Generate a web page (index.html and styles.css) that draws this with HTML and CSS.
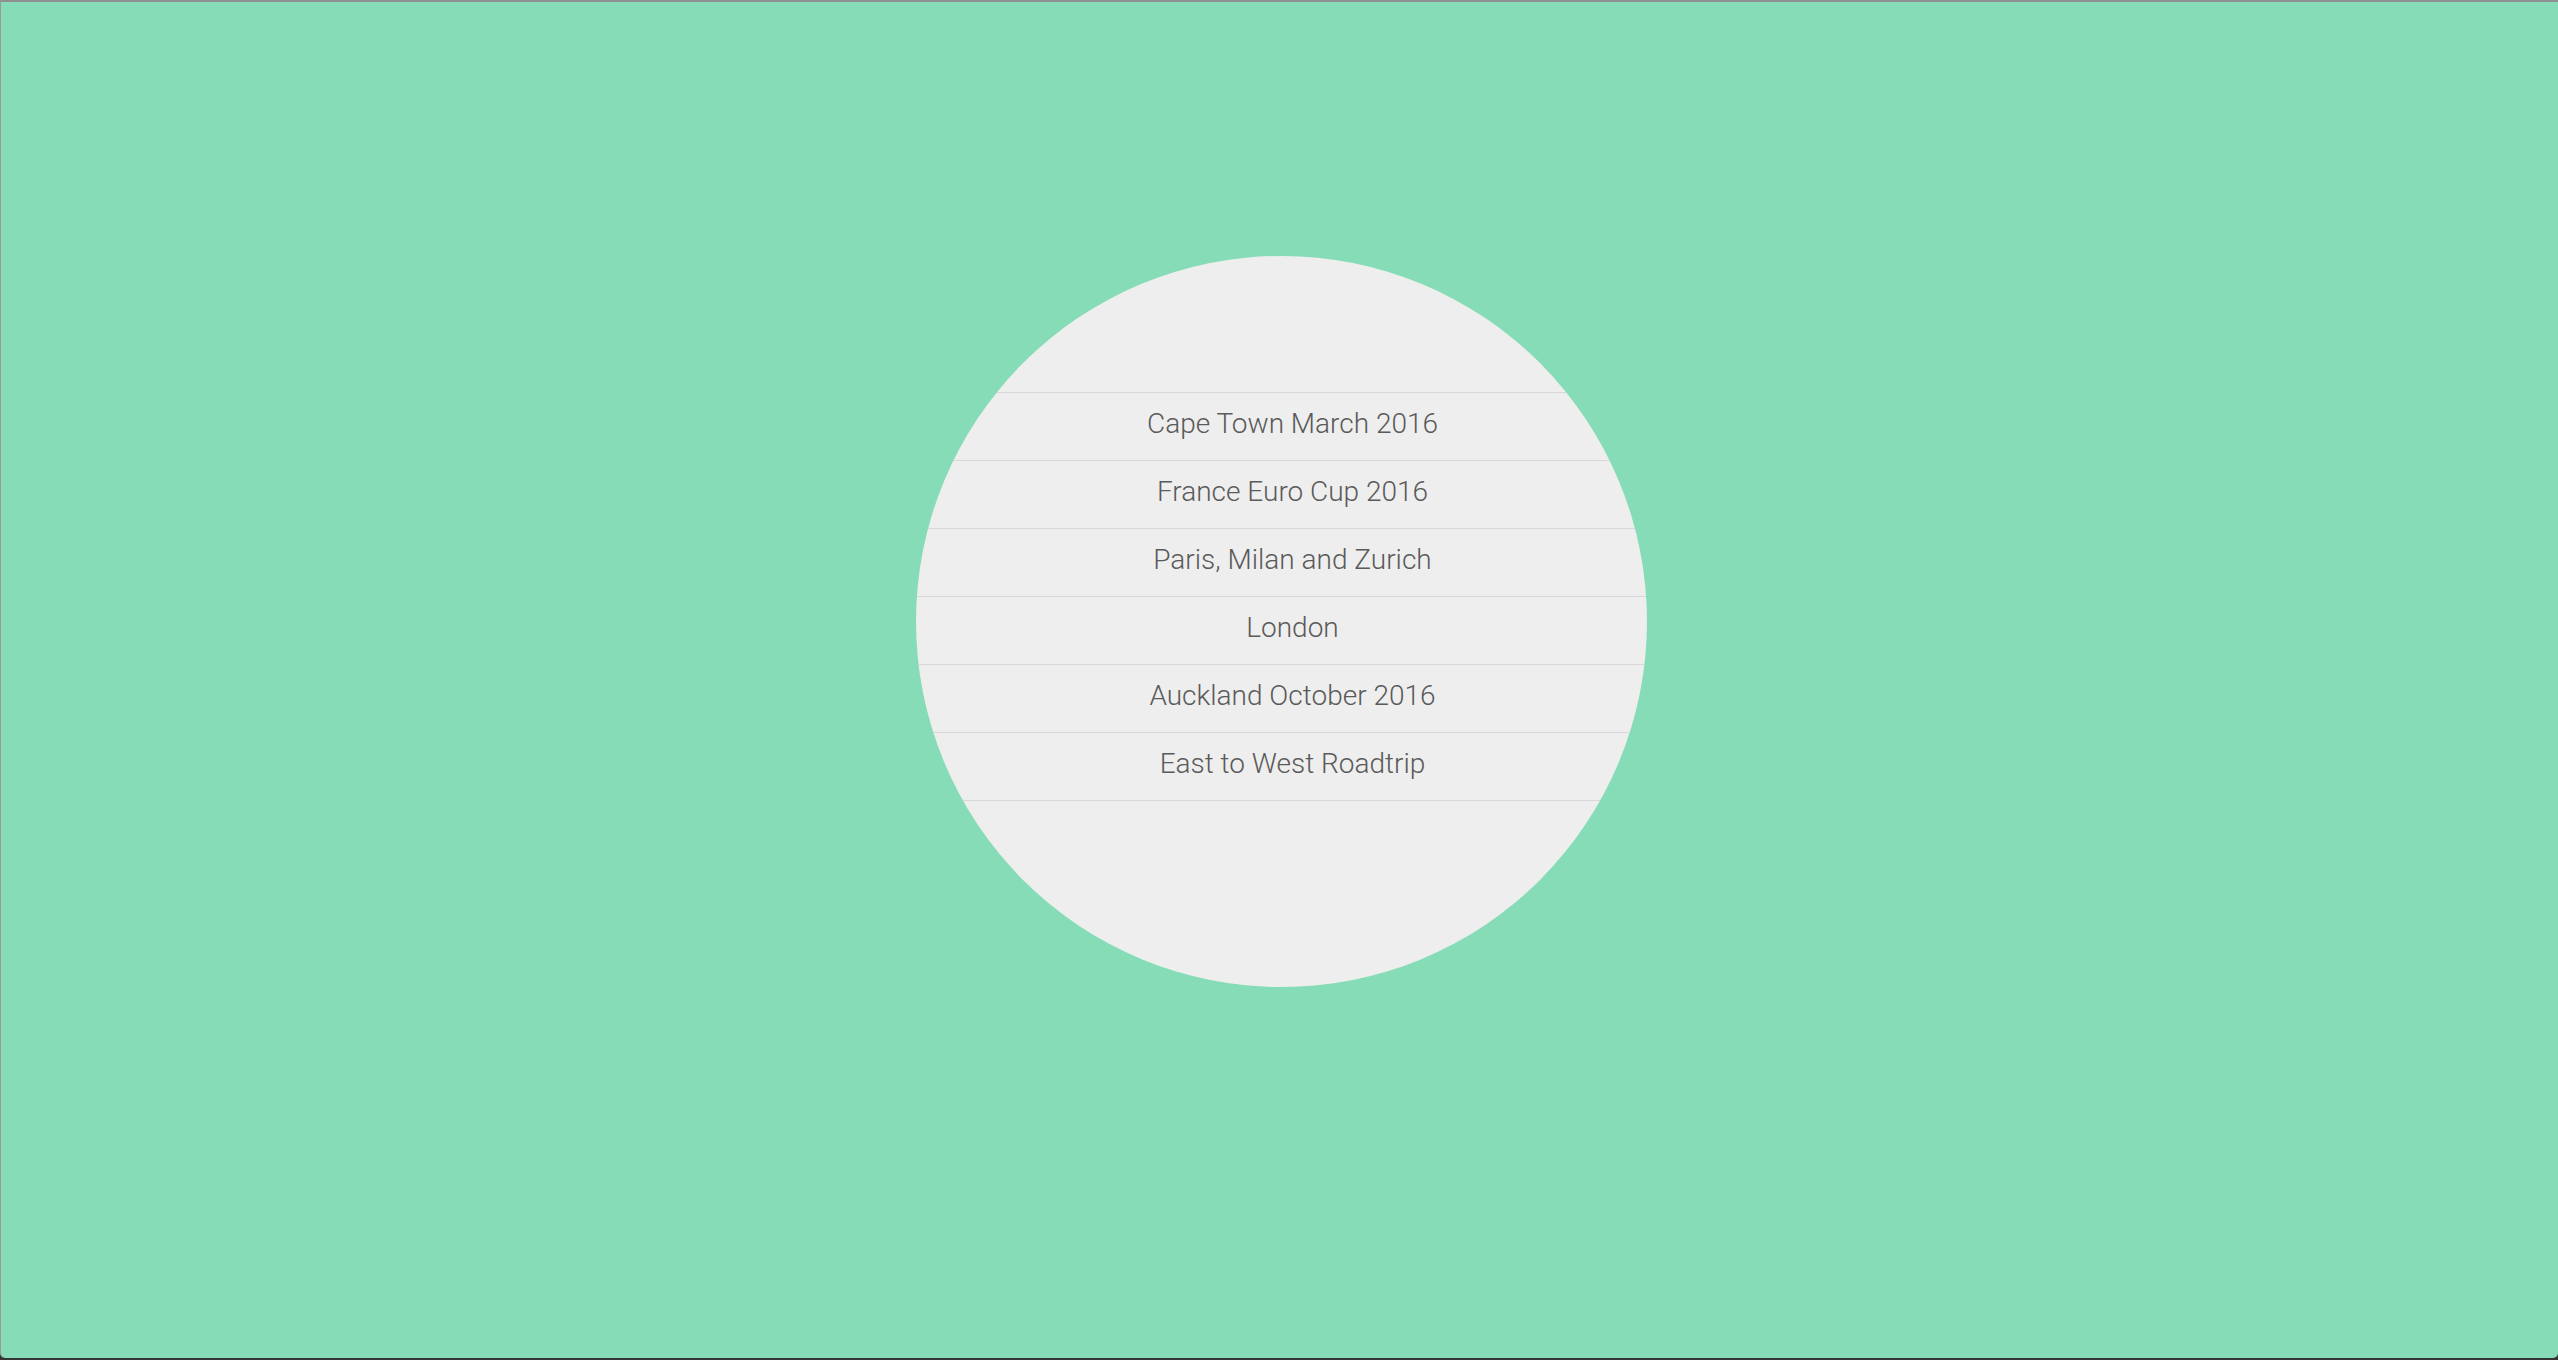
FILE: index.html
```html
<!DOCTYPE html>
<html lang="en">
<head>
<meta charset="utf-8">
<title>Trips</title>
<link rel="stylesheet" href="styles.css">
</head>
<body>
<div class="window">
  <div class="circle">
    <ul class="trips">
      <li class="trip">Cape Town March 2016</li>
      <li class="trip">France Euro Cup 2016</li>
      <li class="trip">Paris, Milan and Zurich</li>
      <li class="trip">London</li>
      <li class="trip">Auckland October 2016</li>
      <li class="trip">East to West Roadtrip</li>
    </ul>
  </div>
</div>
</body>
</html>
```
FILE: styles.css
```css
html {
  background: #353535;
  height: 100%;
}
body {
  margin: 0;
}
.window {
  height: 1358px;
  box-sizing: border-box;
  border-top: 2px solid #8f8f8f;
  border-left: 1px solid #9a9a9a;
  border-radius: 0 0 5px 5px;
  background: #86dcb7;
  display: flex;
  justify-content: center;
  align-items: flex-start;
  padding-top: 254px;
  padding-left: 4px;
}
.circle {
  width: 731px;
  height: 731px;
  flex: 0 0 731px;
  box-sizing: border-box;
  border-radius: 50%;
  background: #eeeeee;
  overflow: hidden;
  padding-top: 136px;
}
.trips {
  list-style: none;
  margin: 0;
  padding: 0;
}
.trip {
  border-top: 1px solid #d8d8d8;
  line-height: 61px;
  padding-bottom: 6px;
  padding-left: 22px;
  text-align: center;
  font-family: Roboto, "Liberation Sans", sans-serif;
  font-weight: 300;
  font-size: 28px;
  color: #5a5a5a;
}
.trip:last-child {
  border-bottom: 1px solid #d8d8d8;
}
```
